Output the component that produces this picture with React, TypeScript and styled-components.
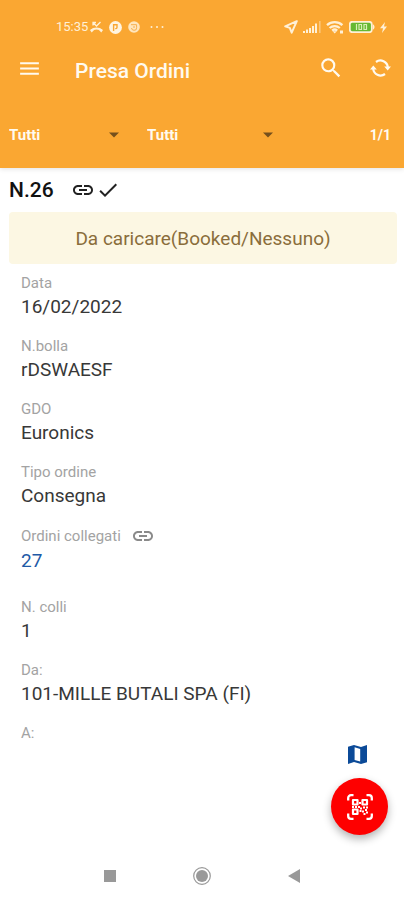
import React from 'react';
import styled, { createGlobalStyle } from 'styled-components';
import { MdMenu, MdSearch, MdLink, MdCheck } from 'react-icons/md';

const GlobalStyle = createGlobalStyle`
  * { box-sizing: border-box; }
  body { margin: 0; background: #fff; color: #2a2a2a; font-family: Roboto, "Noto Sans", sans-serif; }
  button, select { font: inherit; }
  svg { display: block; flex: none; }
`;

const Screen = styled.div`
  min-height: 100vh;
  display: flex;
  flex-direction: column;
`;

const Header = styled.header`
  background: #faa732;
  color: #fffaf0;
  padding-top: 16px;
  box-shadow: 0 1px 5px rgba(0, 0, 0, 0.12);
`;

const StatusBar = styled.div`
  display: flex;
  align-items: center;
  justify-content: space-between;
  height: 22px;
  padding: 0 17px 0 56px;
  font-size: 13px;
  line-height: 22px;
  color: #fff0d6;
`;

const StatusGroup = styled.div<{ $gap: number }>`
  display: flex;
  align-items: center;
  gap: ${(p) => p.$gap}px;
`;

const Toolbar = styled.div`
  display: flex;
  align-items: center;
  height: 60px;
  padding: 0 13px 0 17px;
`;

const Title = styled.h1`
  flex: 1;
  margin: 6px 0 0 33px;
  font-size: 21px;
  line-height: 26px;
  font-weight: 500;
`;

const IconButton = styled.button`
  display: flex;
  align-items: center;
  justify-content: center;
  padding: 0;
  border: 0;
  background: none;
  color: inherit;
  cursor: pointer;
`;

const Actions = styled.div`
  display: flex;
  align-items: center;
  gap: 26px;
`;

const Filters = styled.div`
  display: flex;
  align-items: center;
  height: 70px;
  padding: 4px 13px 0 9px;
  font-size: 15px;
  line-height: 20px;
  font-weight: 700;
`;

const FilterLabel = styled.label`
  display: grid;
  align-items: center;
  flex: 0 1 126px;
  margin-right: 12px;
  & > * { grid-area: 1 / 1; }
  & > svg { justify-self: end; margin-right: 16px; pointer-events: none; }
  & + & { margin-right: 0; flex-basis: 142px; }
`;

const FilterSelect = styled.select`
  appearance: none;
  width: 100%;
  padding: 0;
  border: 0;
  background: transparent;
  color: inherit;
  font-weight: 700;
`;

const Counter = styled.span`
  margin-left: auto;
  font-size: 14px;
`;

const Main = styled.main`
  flex: 1;
  padding: 8px 7px 0 9px;
`;

const OrderHeading = styled.div`
  display: flex;
  align-items: center;
  height: 28px;
  color: #222;
  & > svg + svg { margin-left: 1px; }
`;

const OrderNumber = styled.h2`
  margin: 0 17px 0 0;
  font-size: 21px;
  line-height: 28px;
  font-weight: 500;
  color: #111;
`;

const Notice = styled.div`
  margin: 8px 0;
  padding: 14px 0 12px;
  border-radius: 4px;
  background: #fcf7e3;
  color: #8a6d3b;
  font-size: 19px;
  line-height: 26px;
  text-align: center;
`;

const Fields = styled.dl`
  margin: 0;
  padding: 1px 12px 0;
`;

const Field = styled.div<{ $tall?: boolean }>`
  padding-bottom: ${(p) => (p.$tall ? 22 : 15)}px;
`;

const Label = styled.dt<{ $tall?: boolean }>`
  display: flex;
  align-items: center;
  gap: 10px;
  height: ${(p) => (p.$tall ? 22 : 20)}px;
  font-size: 15px;
  line-height: 20px;
  color: #a3a3a3;
  & > svg { color: #8a8a8a; }
`;

const Value = styled.dd`
  margin: 0;
  font-size: 19px;
  line-height: 28px;
  color: #383838;
`;

const OrderLink = styled.a`
  color: #2159a6;
  text-decoration: none;
`;

const Floating = styled.div`
  position: fixed;
  right: 16px;
  bottom: 65px;
  display: flex;
  flex-direction: column;
  align-items: center;
  gap: 14px;
  color: #0b4a98;
`;

const MapButton = styled(IconButton)`
  margin-right: 4px;
`;

const ScanButton = styled(IconButton)`
  width: 57px;
  height: 57px;
  border-radius: 50%;
  background: #fe0000;
  color: #fff;
  box-shadow: 0 4px 8px rgba(0, 0, 0, 0.3);
`;

const SystemNav = styled.nav`
  position: sticky;
  bottom: 0;
  display: flex;
  justify-content: center;
  gap: 72px;
  height: 48px;
  background: #fff;
  color: #999;
`;

const NavButton = styled(IconButton)`
  width: 20px;
`;

const Caret = () => (
  <svg width="10" height="6" viewBox="0 0 10 6" aria-hidden="true">
    <path d="M0 0.5h10L5 5.5z" fill="#75501c" />
  </svg>
);

const Filter = ({ name }: { name: string }) => (
  <FilterLabel>
    <FilterSelect aria-label={name} defaultValue="tutti">
      <option value="tutti">Tutti</option>
    </FilterSelect>
    <Caret />
  </FilterLabel>
);

const MissedCallIcon = () => (
  <svg width="13" height="12" viewBox="0 0 13 12" aria-hidden="true">
    <path d="M1.2 9.6C4 6.900 9 6.900 11.800 9.600" fill="none" stroke="currentColor" strokeWidth="2" />
    <path d="M0 9l2.500-1.500 1.300 1.800L1.700 11.500zM13 9l-2.500-1.500-1.300 1.800 2.100 2.200z" fill="currentColor" />
    <path d="M3 1.500l3.500 3.500L10.500 1M3 4.500v-3h3" fill="none" stroke="currentColor" strokeWidth="1.300" />
  </svg>
);

const AppBadge = () => (
  <svg width="13" height="13" viewBox="0 0 13 13" aria-hidden="true">
    <circle cx="6.5" cy="6.5" r="6.4" fill="#fff4df" />
    <path d="M4.600 10V3.800h3.400v2.600q0 1.200-1.800 1.200" fill="none" stroke="#faa732" strokeWidth="1.4" />
  </svg>
);

const TargetBadge = () => (
  <svg width="12" height="12" viewBox="0 0 12 12" aria-hidden="true">
    <circle cx="6" cy="6" r="5.8" fill="#ffe6bd" />
    <path d="M3 3.700h5.600v3A2.400 2.400 0 0 1 6 9.300 2.600 2.600 0 0 1 3.500 7M5 6h2" fill="none" stroke="#f6ae4c" strokeWidth="1" />
  </svg>
);

const Dots = () => (
  <svg width="14" height="4" viewBox="0 0 14 4" fill="#fff0d6" aria-hidden="true">
    <circle cx="1.5" cy="2" r="1" /><circle cx="7" cy="2" r="1" /><circle cx="12.5" cy="2" r="1" />
  </svg>
);

const LocationIcon = () => (
  <svg width="14" height="14" viewBox="0 0 14 14" aria-hidden="true">
    <path d="M12.8 1.2 1.2 6.3l4.6 1.6 1.9 4.8z" fill="none" stroke="currentColor" strokeWidth="2" strokeLinejoin="round" />
  </svg>
);

const SignalIcon = () => (
  <svg width="18" height="12" viewBox="0 0 18 12" fill="currentColor" aria-hidden="true">
    <path d="M0 10h2v2H0zM3 8.500h2V12H3zM6 7h2v5H6zM9 5h2v7H9zM12 2.500h2V12h-2z" />
    <path d="M16 0h1.6v12H16z" opacity="0.45" />
  </svg>
);

const WifiIcon = () => (
  <svg width="18" height="14" viewBox="0 0 18 14" aria-hidden="true">
    <path d="M1 5.2a11.4 11.4 0 0 1 15.4 0M3.6 8a7.6 7.6 0 0 1 10.2 0M6.2 10.6a3.8 3.8 0 0 1 5 0" fill="none" stroke="currentColor" strokeWidth="2.300" />
    <path d="M6.6 11.2h4.2L8.7 13.6zM14 10.500h3v3h-3z" fill="currentColor" />
  </svg>
);

const BatteryIcon = () => (
  <svg width="26" height="12" viewBox="0 0 26 12" aria-hidden="true">
    <rect x="0.8" y="0.8" width="22" height="10.4" rx="2.5" fill="#65b832" stroke="#fff0d6" strokeWidth="1.8" />
    <path d="M24 3.5c2 .5 2 4.500 0 5z" fill="#fff0d6" />
    <path d="M7.500 3v6M10 3.500h2.500v5H10zM15 3.500h2.500v5H15z" fill="none" stroke="#d9efb5" strokeWidth="1.200" />
  </svg>
);

const BoltIcon = () => (
  <svg width="7" height="11" viewBox="0 0 7 11" aria-hidden="true">
    <path d="M5 0 0 6.2h3L2 11l5-6.400H4z" fill="currentColor" />
  </svg>
);

const SyncIcon = () => (
  <svg width="21" height="20" viewBox="0 0 21 20" aria-hidden="true">
    <path d="M17.800 9.500A7.400 7.400 0 0 0 6 4M3.200 10.500A7.400 7.400 0 0 0 15 16" fill="none" stroke="currentColor" strokeWidth="2.200" />
    <path d="M14.200 8.500H21L17.700 12.500zM0 11.500h6.800L3.300 7.500z" fill="currentColor" />
  </svg>
);

const MapIcon = () => (
  <svg width="19" height="19" viewBox="0 0 19 19" aria-hidden="true">
    <path d="M0 1.800 6 0l7 2 6-2v17.200L13 19l-7-2-6 2z" fill="currentColor" />
    <path d="M6.600 2.300l5.600 1.600v12.700l-5.600-1.600z" fill="#fff" />
  </svg>
);

const ScanIcon = () => (
  <svg width="26" height="26" viewBox="0 0 26 26" fill="none" stroke="currentColor" aria-hidden="true">
    <path d="M1.200 6.500V4A2.800 2.800 0 0 1 4 1.200h2.500M19.500 1.200H22A2.800 2.800 0 0 1 24.800 4v2.500M24.800 19.500V22a2.800 2.800 0 0 1-2.800 2.800h-2.500M6.500 24.800H4A2.800 2.800 0 0 1 1.200 22v-2.500" strokeWidth="2.300" />
    <path d="M6 6h4.500v4.500H6zM15.500 6H20v4.500h-4.500zM6 15.500h4.500V20H6z" strokeWidth="2.200" strokeLinejoin="round" />
    <path d="M12 8h2v2h-2zM5 12h2v2H5zM8 12h2v2H8zM11 12h2v2h-2zM13 13.500h2v2h-2zM12.500 16h2v2h-2zM16 12.500h2v2h-2zM19 12.500h2v2h-2zM15 16.500h2v2h-2zM18 15h2v2h-2zM19 17.500h2v2h-2zM16.500 19h2v2h-2z" fill="currentColor" stroke="none" />
  </svg>
);

const fieldsBefore = [
  ['Data', '16/02/2022'],
  ['N.bolla', 'rDSWAESF'],
  ['GDO', 'Euronics'],
  ['Tipo ordine', 'Consegna'],
];

const fieldsAfter = [
  ['N. colli', '1'],
  ['Da:', '101-MILLE BUTALI SPA (FI)'],
  ['A:', ''],
];

const renderField = ([label, value]: string[]) => (
  <Field key={label}>
    <Label>{label}</Label>
    <Value>{value}</Value>
  </Field>
);

export default function App() {
  return (
    <Screen>
      <GlobalStyle />
      <Header>
        <StatusBar>
          <StatusGroup $gap={10}>
            <StatusGroup $gap={6}>
              <StatusGroup $gap={2}>
                <span>15:35</span>
                <MissedCallIcon />
              </StatusGroup>
              <AppBadge />
              <TargetBadge />
            </StatusGroup>
            <Dots />
          </StatusGroup>
          <StatusGroup $gap={5}>
            <LocationIcon />
            <SignalIcon />
            <WifiIcon />
            <BatteryIcon />
            <BoltIcon />
          </StatusGroup>
        </StatusBar>
        <Toolbar>
          <IconButton aria-label="Menu"><MdMenu size={25} /></IconButton>
          <Title>Presa Ordini</Title>
          <Actions>
            <IconButton aria-label="Cerca"><MdSearch size={26} /></IconButton>
            <IconButton aria-label="Aggiorna"><SyncIcon /></IconButton>
          </Actions>
        </Toolbar>
        <Filters>
          <Filter name="Stato" />
          <Filter name="Tipo" />
          <Counter>1/1</Counter>
        </Filters>
      </Header>
      <Main>
        <OrderHeading>
          <OrderNumber>N.26</OrderNumber>
          <MdLink size={24} />
          <MdCheck size={24} />
        </OrderHeading>
        <Notice>Da caricare(Booked/Nessuno)</Notice>
        <Fields>
          {fieldsBefore.map(renderField)}
          <Field $tall>
            <Label $tall>Ordini collegati <MdLink size={24} /></Label>
            <Value><OrderLink href="#27">27</OrderLink></Value>
          </Field>
          {fieldsAfter.map(renderField)}
        </Fields>
      </Main>
      <Floating>
        <MapButton aria-label="Mappa"><MapIcon /></MapButton>
        <ScanButton aria-label="Scansiona"><ScanIcon /></ScanButton>
      </Floating>
      <SystemNav aria-label="Sistema">
        <NavButton aria-label="Recenti">
          <svg width="12" height="12" viewBox="0 0 12 12"><rect width="12" height="12" fill="currentColor" /></svg>
        </NavButton>
        <NavButton aria-label="Home">
          <svg width="18" height="18" viewBox="0 0 18 18">
            <circle cx="9" cy="9" r="8.300" fill="none" stroke="currentColor" strokeWidth="1.200" />
            <circle cx="9" cy="9" r="6" fill="currentColor" />
          </svg>
        </NavButton>
        <NavButton aria-label="Indietro">
          <svg width="12" height="14" viewBox="0 0 12 14"><path d="M12 0v14L0 7z" fill="currentColor" /></svg>
        </NavButton>
      </SystemNav>
    </Screen>
  );
}
